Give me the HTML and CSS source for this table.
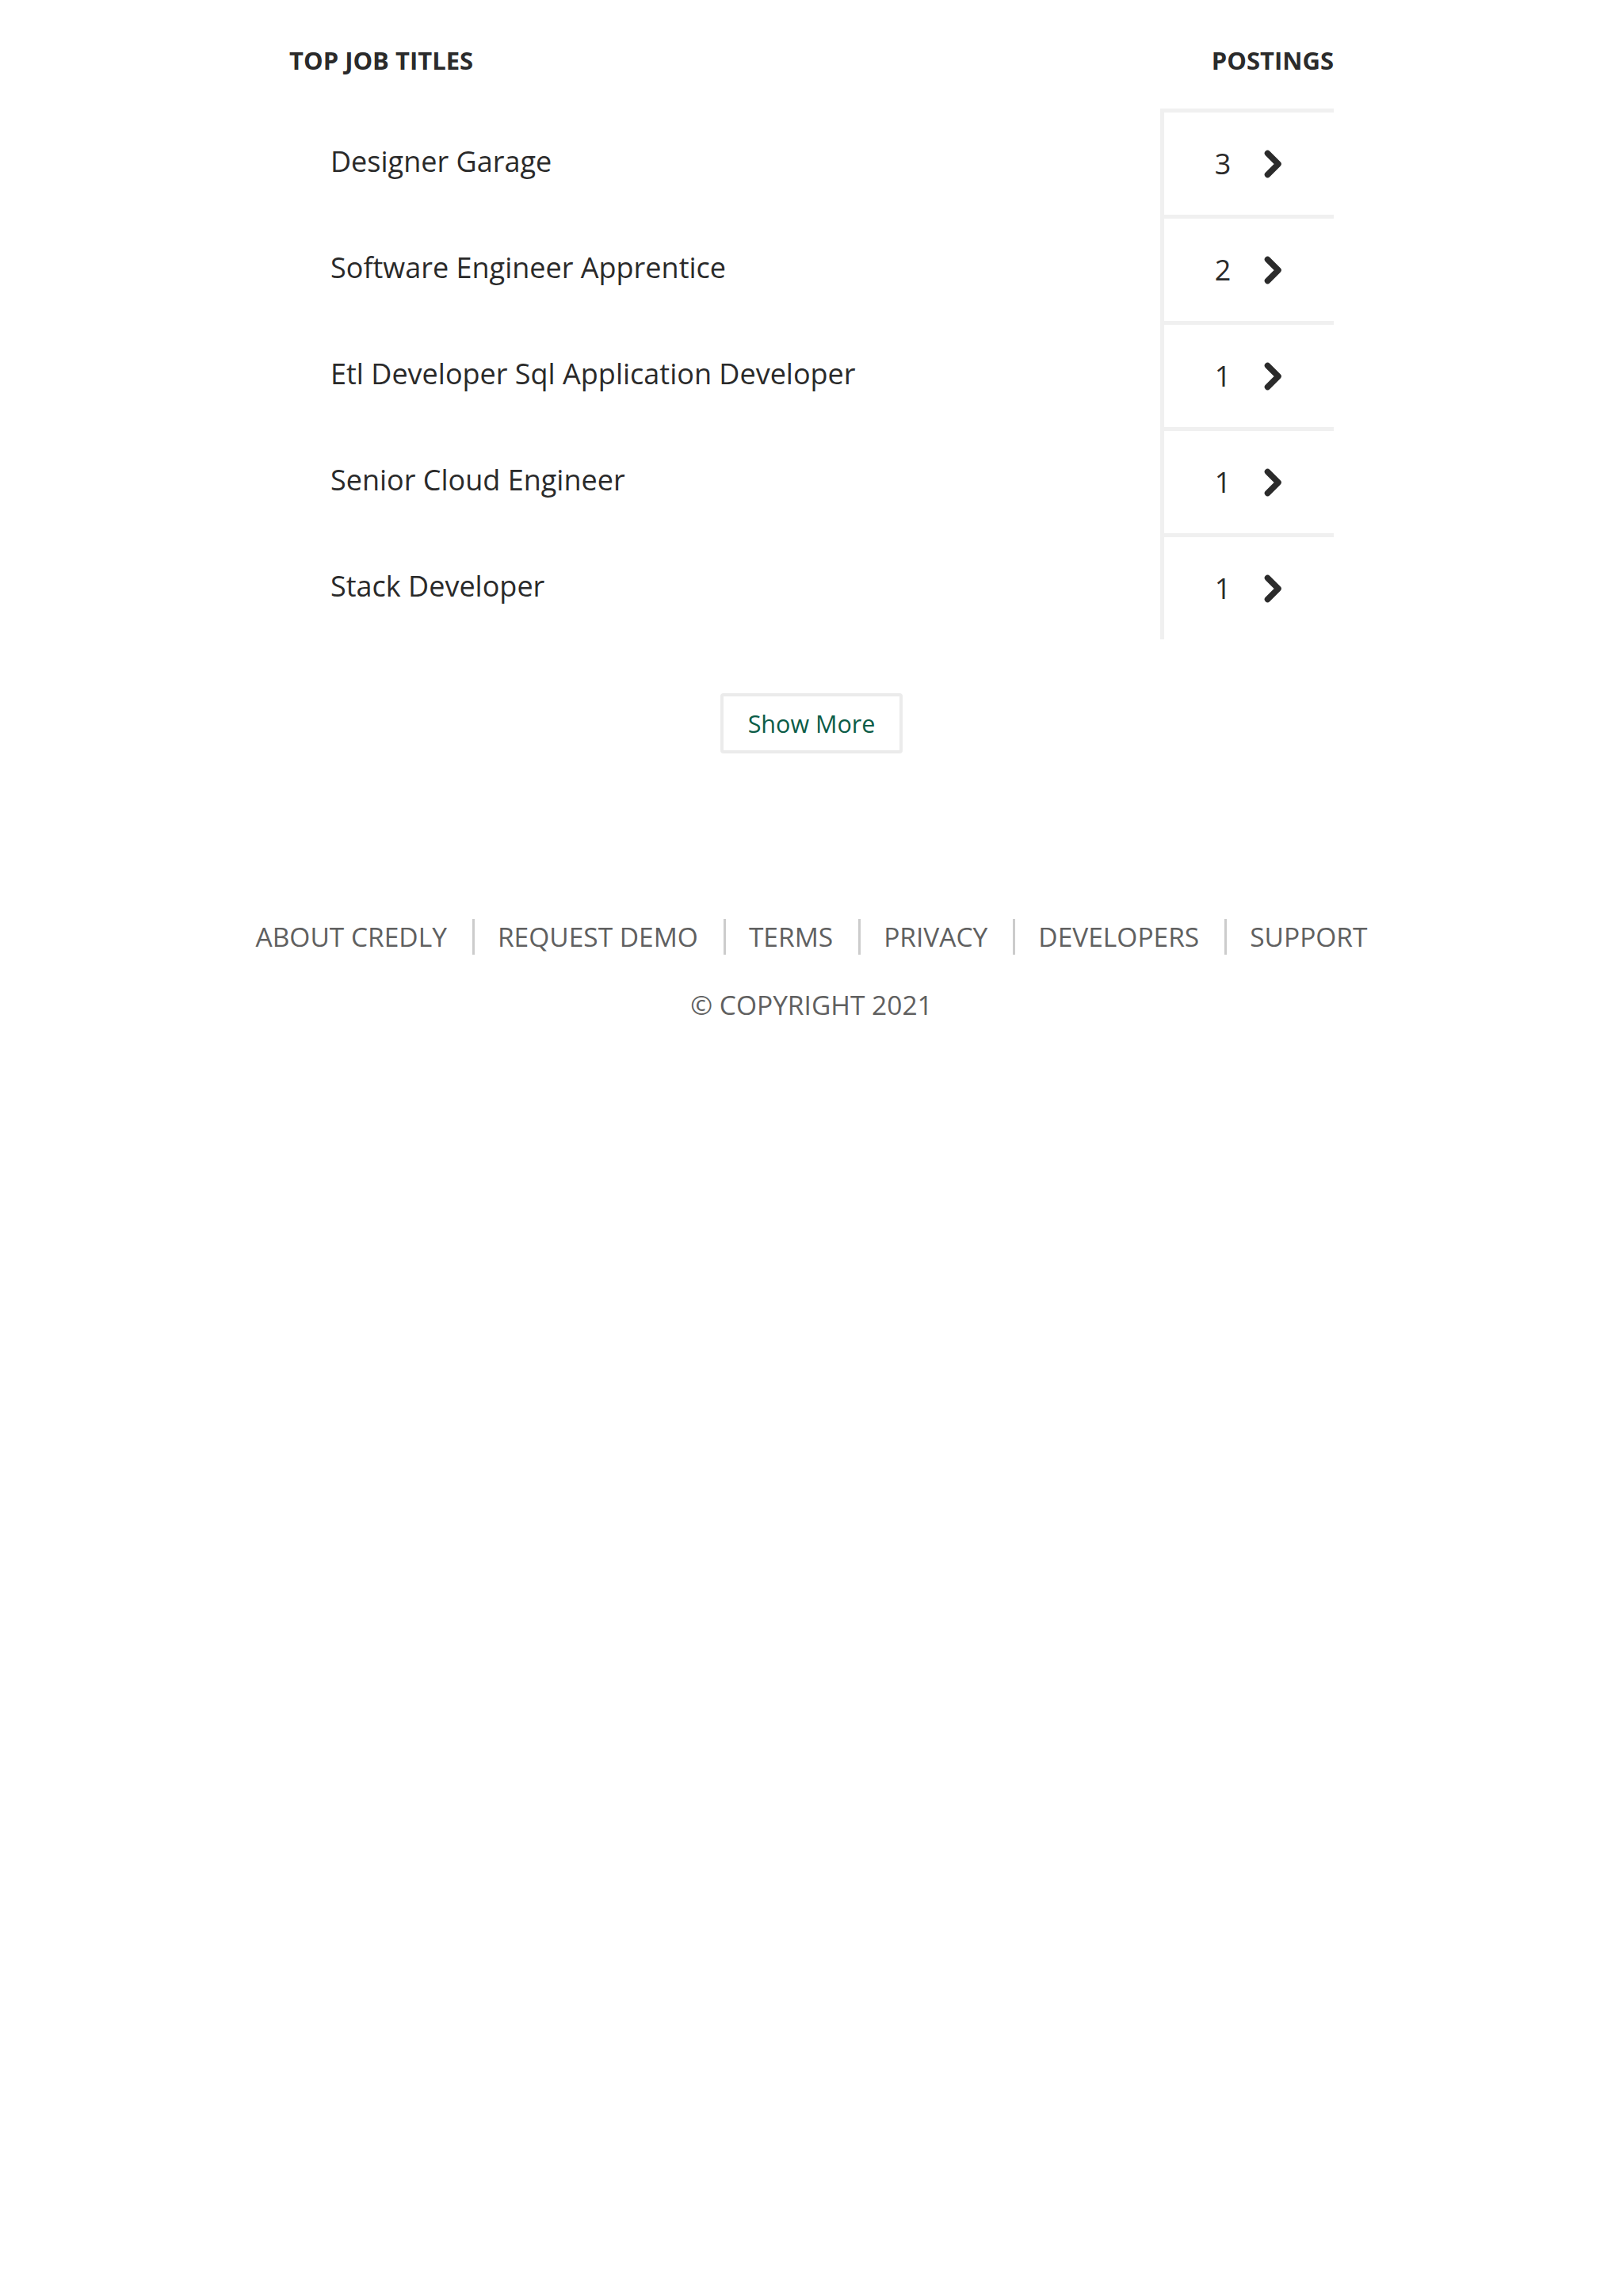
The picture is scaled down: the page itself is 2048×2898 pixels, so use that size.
FILE: index.html
```html
<!DOCTYPE html>
<html lang="en">
<head>
<meta charset="utf-8">
<title>Top Job Titles</title>
<link rel="stylesheet" href="styles.css">
</head>
<body>
<main class="page">
  <section class="jobs">
    <div class="jobs-head">
      <span class="jobs-head__label">TOP JOB TITLES</span>
      <span class="jobs-head__label">POSTINGS</span>
    </div>
    <ul class="jobs-list">
      <li class="job-row">
        <span class="job-row__title">Designer Garage</span>
        <a class="job-row__count" href="#"><span class="job-row__num">3</span><svg class="chev" viewBox="0 0 24 36" width="24" height="36"><path d="M4.5 4.5 L18 18 L4.5 31.5"/></svg></a>
      </li>
      <li class="job-row">
        <span class="job-row__title">Software Engineer Apprentice</span>
        <a class="job-row__count" href="#"><span class="job-row__num">2</span><svg class="chev" viewBox="0 0 24 36" width="24" height="36"><path d="M4.5 4.5 L18 18 L4.5 31.5"/></svg></a>
      </li>
      <li class="job-row">
        <span class="job-row__title">Etl Developer Sql Application Developer</span>
        <a class="job-row__count" href="#"><span class="job-row__num">1</span><svg class="chev" viewBox="0 0 24 36" width="24" height="36"><path d="M4.5 4.5 L18 18 L4.5 31.5"/></svg></a>
      </li>
      <li class="job-row">
        <span class="job-row__title">Senior Cloud Engineer</span>
        <a class="job-row__count" href="#"><span class="job-row__num">1</span><svg class="chev" viewBox="0 0 24 36" width="24" height="36"><path d="M4.5 4.5 L18 18 L4.5 31.5"/></svg></a>
      </li>
      <li class="job-row">
        <span class="job-row__title">Stack Developer</span>
        <a class="job-row__count" href="#"><span class="job-row__num">1</span><svg class="chev" viewBox="0 0 24 36" width="24" height="36"><path d="M4.5 4.5 L18 18 L4.5 31.5"/></svg></a>
      </li>
    </ul>
    <div class="more">
      <button class="more__btn" type="button">Show More</button>
    </div>
  </section>
  <footer class="footer">
    <ul class="footer__links">
      <li class="footer__item"><a href="#">ABOUT CREDLY</a></li>
      <li class="footer__item"><a href="#">REQUEST DEMO</a></li>
      <li class="footer__item"><a href="#">TERMS</a></li>
      <li class="footer__item"><a href="#">PRIVACY</a></li>
      <li class="footer__item"><a href="#">DEVELOPERS</a></li>
      <li class="footer__item"><a href="#">SUPPORT</a></li>
    </ul>
    <p class="footer__copy">© COPYRIGHT 2021</p>
  </footer>
</main>
</body>
</html>
```
FILE: styles.css
```css
html, body {
  margin: 0;
  padding: 0;
  background: #ffffff;
}
body {
  font-family: "Open Sans", "Liberation Sans", sans-serif;
  color: #2a2a2a;
}
.page {
  padding-top: 54px;
}
.jobs {
  width: 1318px;
  margin: 0 auto;
}
.jobs-head {
  display: flex;
  justify-content: space-between;
  align-items: center;
  height: 44px;
  margin-bottom: 39px;
}
.jobs-head__label {
  font-size: 31px;
  line-height: 44px;
  font-weight: 700;
  color: #2b2b2b;
}
.jobs-list {
  list-style: none;
  margin: 0;
  padding: 0;
}
.job-row {
  display: flex;
  align-items: stretch;
  height: 134px;
}
.job-row__title {
  flex: 1;
  display: flex;
  align-items: center;
  padding-left: 52px;
  font-size: 36px;
  line-height: 48px;
  color: #2a2a2a;
}
.job-row__count {
  width: 219px;
  box-sizing: border-box;
  border-top: 5px solid #f0f0f0;
  border-left: 5px solid #f0f0f0;
  display: flex;
  align-items: center;
  justify-content: center;
  gap: 42px;
  text-decoration: none;
  color: #2a2a2a;
}
.job-row__num {
  font-size: 36px;
  line-height: 48px;
}
.chev {
  display: block;
}
.chev path {
  fill: none;
  stroke: #2b2b2b;
  stroke-width: 7.5;
  stroke-linecap: round;
  stroke-linejoin: round;
}
.more {
  display: flex;
  justify-content: center;
  margin-top: 68px;
}
.more__btn {
  font-family: "Open Sans", "Liberation Sans", sans-serif;
  font-size: 30.5px;
  line-height: 40px;
  color: #0b5c47;
  background: #ffffff;
  border: 4px solid #ebebeb;
  border-radius: 4px;
  padding: 14px 31px;
  margin: 0;
  cursor: pointer;
}
.footer {
  margin-top: 209px;
  text-align: center;
}
.footer__links {
  list-style: none;
  margin: 0;
  padding: 0;
  display: flex;
  justify-content: center;
}
.footer__item {
  font-size: 33.5px;
  line-height: 45px;
  padding: 0 32px 0 29px;
}
.footer__item + .footer__item {
  border-left: 3px solid #cccccc;
}
.footer__item:first-child {
  padding-left: 32px;
}
.footer__item a {
  color: #606060;
  text-decoration: none;
}
.footer__copy {
  margin: 41px 0 0;
  font-size: 33.5px;
  line-height: 45px;
  color: #606060;
}
```
